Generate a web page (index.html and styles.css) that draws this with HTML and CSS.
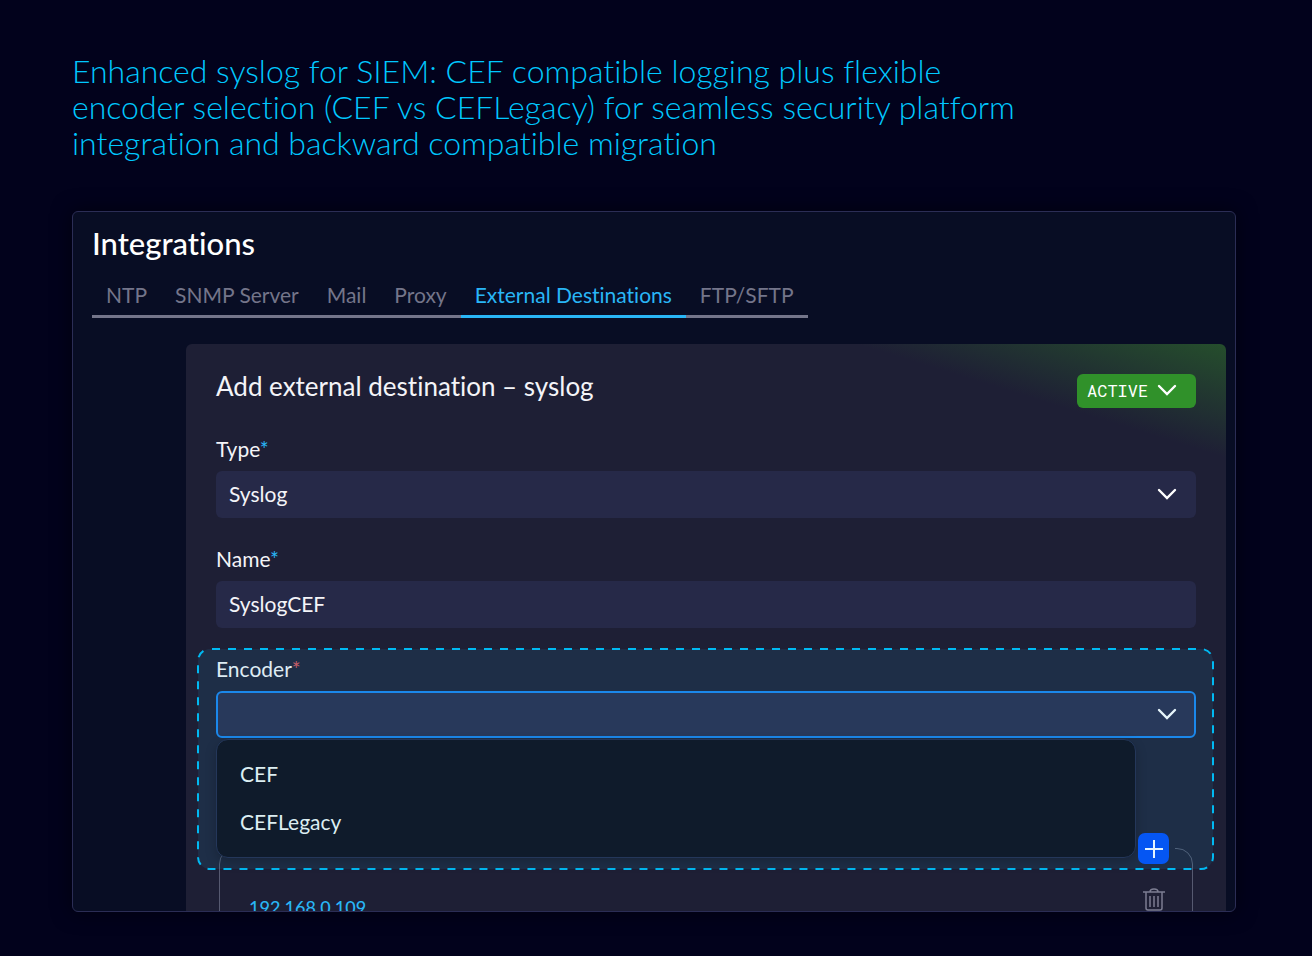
FILE: index.html
```html
<!DOCTYPE html>
<html lang="en">

<head>
    <meta charset="UTF-8">
    <meta name="viewport" content="width=device-width, initial-scale=1.0">
    <title>Integrations</title>
    <link rel="stylesheet" href="styles.css">
</head>

<body>
    <h1 class="headline">
        Enhanced syslog for SIEM: CEF compatible logging plus flexible<br>
        encoder selection (CEF vs CEFLegacy) for seamless security platform<br>
        integration and backward compatible migration
    </h1>

    <main class="panel">
        <h2 class="panel-title">Integrations</h2>

        <nav class="tabs">
            <a class="tab" href="#ntp">NTP</a>
            <a class="tab" href="#snmp">SNMP Server</a>
            <a class="tab" href="#mail">Mail</a>
            <a class="tab" href="#proxy">Proxy</a>
            <a class="tab active" href="#external">External Destinations</a>
            <a class="tab" href="#ftp">FTP/SFTP</a>
        </nav>

        <form class="card">
            <div class="card-header">
                <h3 class="card-title">Add external destination – syslog</h3>
                <div class="status">
                    <select class="status-select" aria-label="Status">
                        <option>ACTIVE</option>
                    </select>
                    <svg class="chevron" viewBox="0 0 20 12"><path d="M2 2l8 8 8-8" /></svg>
                </div>
            </div>

            <div class="field">
                <label for="type">Type<span class="required">*</span></label>
                <div class="control">
                    <select id="type" class="form-control">
                        <option>Syslog</option>
                    </select>
                    <svg class="chevron" viewBox="0 0 20 12"><path d="M2 2l8 8 8-8" /></svg>
                </div>
            </div>

            <div class="field">
                <label for="name">Name<span class="required">*</span></label>
                <div class="control">
                    <input type="text" id="name" class="form-control" value="SyslogCEF">
                </div>
            </div>

            <div class="field encoder">
                <label for="encoder">Encoder<span class="required error">*</span></label>
                <div class="control">
                    <select id="encoder" class="form-control open">
                        <option></option>
                    </select>
                    <svg class="chevron" viewBox="0 0 20 12"><path d="M2 2l8 8 8-8" /></svg>
                </div>

                <!-- Open encoder menu -->
                <div class="menu">
                    <button type="button" class="menu-item">CEF</button>
                    <button type="button" class="menu-item">CEFLegacy</button>
                </div>

                <!-- Dashed highlight -->
                <svg class="highlight"><rect x="1" y="1" rx="12" /></svg>
            </div>

            <!-- Hosts -->
            <fieldset class="hosts">
                <legend class="hosts-legend">
                    <button type="button" class="btn-add" aria-label="Add host">
                        <svg viewBox="0 0 20 20"><path d="M10 1v18M1 10h18" /></svg>
                    </button>
                </legend>
                <div class="host">
                    <a class="host-name" href="#host">192.168.0.109</a>
                    <button type="button" class="btn-delete" aria-label="Delete host">
                        <svg viewBox="0 0 24 26">
                            <path d="M1 5h22M8 5c0-4 8-4 8 0M4 5v16a2 2 0 0 0 2 2h12a2 2 0 0 0 2-2V5M8 9v11M12 9v11M16 9v11" />
                        </svg>
                    </button>
                </div>
            </fieldset>
        </form>
    </main>
</body>

</html>
```

FILE: styles.css
```css
:root {
    --page-color: #02021c;
    --panel-color: #080d24;
    --card-color: #1e1f35;
    --field-color: #262948;
    --accent-color: #00b9f2;
    --link-color: #29b6f6;
    --muted-color: #74758a;
    --focus-color: #1a84ee;
}

* {
    margin: 0;
    padding: 0;
    box-sizing: border-box;
    font-family: Lato, "Liberation Sans", sans-serif;
    font-variant-ligatures: none;
}

body {
    background-color: var(--page-color);
    height: 100vh;
    padding: 53px 76px 44px 72px;
    display: flex;
    flex-direction: column;
    overflow: hidden;
}

.headline {
    color: #00c8ff;
    font-size: 32px;
    font-weight: 300;
    line-height: 36px;
    margin-bottom: 50px;
}

.panel {
    flex: 1;
    min-height: 0;
    overflow: hidden;
    padding: 13px 9px 0 19px;
    border: 1px solid #2b2d55;
    border-radius: 6px;
    background-color: var(--panel-color);
    box-shadow: 0 0 20px rgba(0, 0, 0, 0.5);
}

.panel-title {
    color: #fff;
    font-size: 31px;
    font-weight: 500;
    line-height: 36px;
}

/* Tabs */
.tabs {
    display: flex;
    margin-top: 20px;
}

.tab {
    padding: 0 14px 6px;
    border-bottom: 3px solid var(--muted-color);
    color: var(--muted-color);
    font-size: 21px;
    line-height: 28px;
    text-decoration: none;
    white-space: nowrap;
}

.tab.active {
    color: var(--link-color);
    border-color: var(--link-color);
}

/* Card */
.card {
    margin: 26px 0 0 94px;
    padding: 30px;
    border-radius: 6px;
    background: linear-gradient(to top right, transparent 50%, #254e2c) top right / 370px 114px no-repeat var(--card-color);
}

.card-header {
    display: flex;
    justify-content: space-between;
    margin-bottom: 28px;
}

.card-title {
    color: #f4f4f8;
    font-size: 26px;
    font-weight: 400;
    line-height: 24px;
}

.status,
.control {
    position: relative;
}

.status-select {
    appearance: none;
    display: block;
    width: 119px;
    height: 34px;
    padding: 0 10px 2px;
    border: none;
    border-radius: 6px;
    background-color: #30912a;
    color: #fff;
    font-family: "Roboto Mono", "Liberation Mono", monospace;
    font-size: 17px;
}

.chevron {
    position: absolute;
    top: 50%;
    right: 19px;
    width: 20px;
    height: 12px;
    margin-top: -7px;
    fill: none;
    stroke: #fff;
    stroke-width: 2.4;
    stroke-linecap: round;
    pointer-events: none;
}

/* Fields */
.field {
    margin-bottom: 28px;
}

.field label {
    display: block;
    margin-bottom: 9px;
    color: #f4f4f8;
    font-size: 21px;
    line-height: 26px;
}

.required {
    color: var(--link-color);
}

.required.error {
    color: #d9535a;
}

.form-control {
    appearance: none;
    display: block;
    width: 100%;
    height: 47px;
    padding: 0 13px 2px;
    border: none;
    border-radius: 6px;
    background-color: var(--field-color);
    color: #f4f4f8;
    font-size: 21px;
}

.form-control.open {
    border: 2px solid var(--focus-color);
    background-color: #292b4c;
}

/* Encoder */
.encoder {
    position: relative;
    margin-bottom: 95px;
}

.highlight {
    position: absolute;
    top: -8px;
    left: -19px;
    width: calc(100% + 37px);
    height: 222px;
    z-index: 1;
    pointer-events: none;
}

.highlight rect {
    width: calc(100% - 2px);
    height: calc(100% - 2px);
    fill: rgba(38, 170, 220, 0.11);
    stroke: var(--accent-color);
    stroke-width: 2;
    stroke-dasharray: 8 8;
    stroke-dashoffset: -2;
}

.menu {
    position: absolute;
    top: 100%;
    left: 0;
    right: 60px;
    margin-top: 1px;
    padding: 10px 0 11px;
    border: 1px solid #24375a;
    border-radius: 12px;
    background-color: #0f1b2b;
    box-shadow: 0 4px 12px rgba(0, 0, 0, 0.2);
    z-index: 2;
}

.menu-item {
    display: block;
    width: 100%;
    height: 48px;
    padding: 0 23px 2px;
    border: none;
    background: none;
    color: #dceef2;
    font-size: 21px;
    text-align: left;
}

/* Hosts */
.hosts {
    margin: 0 3px;
    padding: 0 17px 17px 29px;
    border: 1px solid #565970;
    border-radius: 16px;
}

.hosts-legend {
    position: relative;
    margin-left: auto;
    padding: 0 6px;
    z-index: 3;
}

.btn-add {
    display: flex;
    align-items: center;
    justify-content: center;
    width: 31px;
    height: 31px;
    border: none;
    border-radius: 7px;
    background-color: #0556f3;
}

.btn-add svg {
    width: 20px;
    height: 20px;
    stroke: #e4f4ff;
    stroke-width: 2;
}

.host {
    display: flex;
    align-items: flex-start;
    justify-content: space-between;
    padding: 23px 9px 0 0;
}

.host-name {
    color: var(--link-color);
    font-size: 18px;
    font-weight: 500;
    line-height: 40px;
    text-decoration: none;
}

.btn-delete {
    border: none;
    background: none;
}

.btn-delete svg {
    display: block;
    width: 24px;
    height: 26px;
    fill: none;
    stroke: #7c7d92;
    stroke-width: 1.5;
}
```
